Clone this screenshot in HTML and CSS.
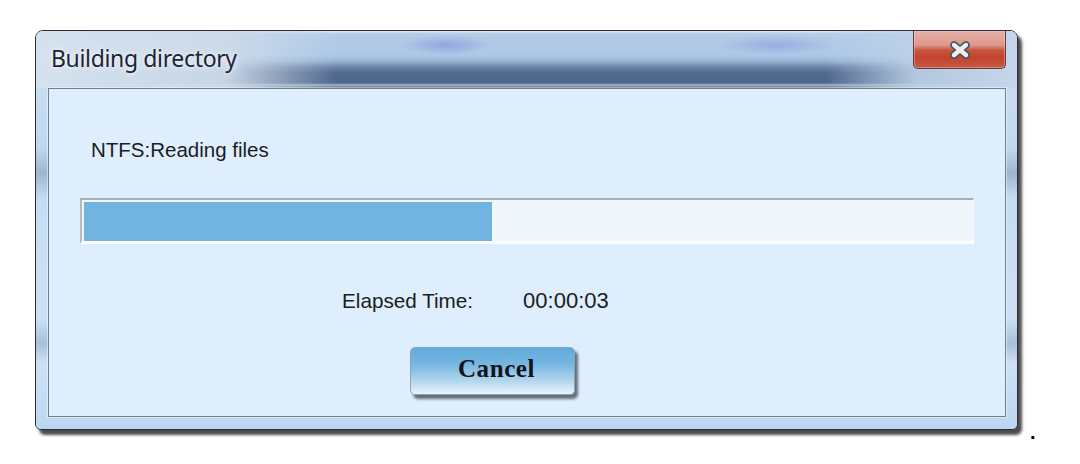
FILE: index.html
```html
<!DOCTYPE html>
<html lang="en">
<head>
<meta charset="utf-8">
<title>Building directory</title>
<link rel="stylesheet" href="styles.css">
</head>
<body>
<div class="page"><div class="window"><div class="window-inner">
    <div class="titlebar">
      <span class="title">Building directory</span>
      <button class="close" aria-label="Close">
        <svg width="26" height="20" viewBox="0 0 26 20">
          <path d="M7 5 L19 15 M19 5 L7 15" stroke="#4b5260" stroke-width="7.5" stroke-linecap="round" fill="none"/>
          <path d="M7 5 L19 15 M19 5 L7 15" stroke="#eef1f4" stroke-width="4.4" stroke-linecap="round" fill="none"/>
        </svg>
      </button>
    </div>
    <div class="frame">
      <div class="client">
        <div class="status">NTFS:Reading files</div>
        <div class="progress"><div class="fill" style="width:45.9%"></div></div>
        <div class="elapsed"><span class="label">Elapsed Time:</span><span class="value">00:00:03</span></div>
        <div class="actions"><button class="cancel">Cancel</button></div>
      </div>
    </div>
  </div></div><span class="dot">.</span></div>
</body>
</html>
```
FILE: styles.css
```css
html, body {
  margin: 0;
  background: #ffffff;
}
body {
  font-family: "Liberation Sans", Arial, sans-serif;
}
.page {
  padding: 30px 0 0 35px;
  font-family: "Liberation Sans", Arial, sans-serif;
  font-size: 20px;
  line-height: 20px;
  color: #000000;
}
.window {
  display: inline-block;
  vertical-align: baseline;
  width: 983px;
  height: 400px;
  margin-bottom: 9px;
  box-sizing: border-box;
  border: 1px solid #2a2e34;
  border-radius: 8px 8px 6px 6px;
  overflow: hidden;
  box-shadow: 4px 5px 3px rgba(0, 0, 0, 0.7);
  background: #c4dbf2;
}
.window-inner {
  height: 100%;
  display: flex;
  flex-direction: column;
}
.titlebar {
  height: 57px;
  flex: none;
  display: flex;
  justify-content: space-between;
  align-items: flex-start;
  background:
    radial-gradient(ellipse 45px 10px at 410px 14px, rgba(120, 135, 215, 0.55), rgba(120, 135, 215, 0)),
    radial-gradient(ellipse 60px 10px at 740px 14px, rgba(125, 140, 215, 0.45), rgba(125, 140, 215, 0)),
    linear-gradient(to right, rgba(212, 225, 239, 1) 0px, rgba(205, 219, 234, 0.95) 190px, rgba(200, 215, 232, 0) 300px, rgba(200, 215, 232, 0) 790px, rgba(190, 210, 233, 0.9) 880px, rgba(196, 214, 236, 1) 100%),
    linear-gradient(to bottom, #dce6f1 0px, #b3cce8 3px, #adc8e6 24px, #9ab4d4 30px, #6a84a8 36px, #52698f 42px, #4f6790 52px, #a6b6c8 54px, #8d9cad 55px, #52606f 57px);
}
.title {
  margin-top: 12px;
  padding-left: 15px;
  font-family: "Noto Sans", "Open Sans", sans-serif;
  font-size: 23px;
  line-height: 30px;
  letter-spacing: -0.35px;
  color: #1c2435;
  text-shadow: 0 0 8px rgba(255, 255, 255, 0.85), 0 0 3px rgba(255, 255, 255, 0.7);
}
.close {
  margin: 0 11px 0 0;
  padding: 0;
  width: 93px;
  height: 38px;
  box-sizing: border-box;
  border: 1px solid #6a3a33;
  border-top: none;
  border-radius: 0 0 5px 5px;
  display: flex;
  align-items: center;
  justify-content: center;
  background: linear-gradient(to bottom, #e5b0a8 0%, #dc988d 38%, #c9553e 52%, #c1432d 72%, #c65a48 100%);
  box-shadow: inset 0 0 0 1px rgba(255, 220, 210, 0.35);
}
.close svg {
  display: block;
}
.frame {
  flex: 1;
  display: flex;
  padding: 0 11px 12px 12px;
  background: linear-gradient(to bottom, #c8ddf2 0px, #c2d8ef 60px, #9fb5cf 85px, #c6dcf2 110px, #cde1f5 230px, #a9c0da 255px, #cde1f6 275px, #c2daf3 320px, #bcd6f1 100%);
}
.client {
  flex: 1;
  display: flex;
  flex-direction: column;
  align-items: flex-start;
  border: 1px solid #6f7f8f;
  background: #deeefc;
  box-shadow: 0 0 0 1px rgba(255, 255, 255, 0.45);
}
.status {
  margin-top: 49px;
  padding-left: 42px;
  font-size: 20.5px;
  line-height: 24px;
  color: #1c1c22;
}
.progress {
  margin: 36px 0 0 31px;
  width: 894px;
  height: 46px;
  box-sizing: border-box;
  border-top: 2px solid #a6aeb7;
  border-left: 2px solid #b3bac2;
  border-right: 1px solid #f9fbfd;
  border-bottom: 3px solid #fafcfe;
  padding: 2px 0 0 2px;
  background: #f1f6fa;
}
.fill {
  height: 39px;
  background: #71b4df;
}
.elapsed {
  margin-top: 45px;
  padding-left: 293px;
  display: flex;
  align-items: baseline;
  font-size: 20.7px;
  line-height: 24px;
  color: #1c1c22;
}
.value {
  margin-left: 50px;
  font-size: 22px;
}
.actions {
  margin: 34px 0 0 361px;
}
.cancel {
  width: 165px;
  height: 48px;
  box-sizing: border-box;
  border: 1px solid #86a6bf;
  border-radius: 5px;
  padding: 0 0 4px 8px;
  background: linear-gradient(to bottom, #61aadb 0%, #76b6e1 35%, #b2d6ee 72%, #e8f4fb 100%);
  box-shadow: 3px 4px 3px rgba(0, 0, 0, 0.55);
  font-family: "Liberation Serif", "Times New Roman", serif;
  font-weight: bold;
  font-size: 25px;
  letter-spacing: 0.6px;
  color: #121418;
}
.dot {
  margin-left: 12px;
  font-weight: bold;
  color: #000000;
}
```
